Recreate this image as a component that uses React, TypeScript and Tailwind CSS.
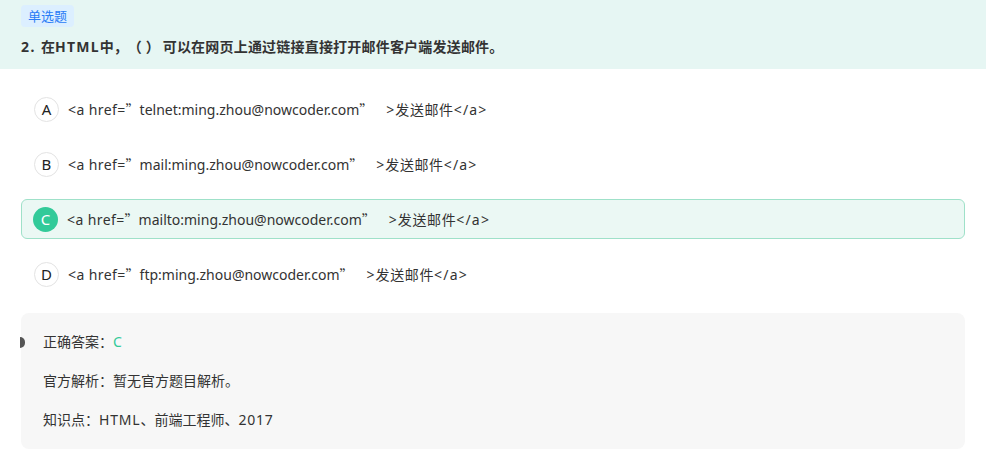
import React from "react";

type Opcao = {
  letra: string;
  protocolo: string;
};

const opcoes: Opcao[] = [
  { letra: "A", protocolo: "telnet" },
  { letra: "B", protocolo: "mail" },
  { letra: "C", protocolo: "mailto" },
  { letra: "D", protocolo: "ftp" },
];

const correta = "C";

const cjk = { fontFamily: '"Noto Sans CJK SC", sans-serif' };

// pontuação em largura cheia, como no original
const Aspas: React.FC = () => (
  <span className="inline-block w-[14px] text-left" style={cjk}>
    ”
  </span>
);

const App: React.FC = () => {
  return (
    <div
      className="w-[986px] h-[454px] bg-white text-[#333] overflow-hidden"
      style={{ fontFamily: '"Noto Sans", "Noto Sans CJK SC", sans-serif' }}
    >
      {/* cabeçalho da questão */}
      <div className="h-[69px] bg-[#e6f6f3] px-[21px] pt-[3px]">
        <span className="inline-block h-[22px] px-[7px] rounded-[4px] bg-[#dcefff] text-[#2a7cf6] text-[13px] leading-[22px]">
          单选题
        </span>
        <h2 className="mt-[9px] text-[14px] font-bold leading-[20px] text-[#333] whitespace-pre">
          <span className="tracking-[1.5px]">2. </span>
          在<span className="tracking-[1.2px]">HTML</span>中
          <span className="inline-block w-[14px] text-left" style={cjk}>，</span>
          <span className="inline-block w-[14px] text-right" style={cjk}>（</span>
          <span className="inline-block w-[18px] text-right" style={cjk}>）</span>
          <span className="ml-[3px] tracking-[0.2px]">可以在网页上通过链接直接打开邮件客户端发送邮件。</span>
        </h2>
      </div>

      {/* opções */}
      <div className="px-[21px] pt-[20px] flex flex-col gap-[15px]">
        {opcoes.map((o) => {
          const ativa = o.letra === correta;
          return (
            <div
              key={o.letra}
              className={
                ativa
                  ? "h-[40px] flex items-center pl-[11px] rounded-[6px] border border-[#9fe1c9] bg-[#ebf8f4]"
                  : "h-[40px] flex items-center pl-[12px] border border-transparent"
              }
            >
              <span
                className={
                  ativa
                    ? "w-[25px] h-[25px] rounded-full bg-[#32ca99] text-white flex items-center justify-center text-[15px]"
                    : "w-[25px] h-[25px] rounded-full border border-[#e3e3e3] bg-white flex items-center justify-center text-[15px] text-[#222]"
                }
              >
                {o.letra}
              </span>
              <span className="ml-[9px] text-[14px] whitespace-pre">
                <span className="tracking-[0.4px]">{"<a href="}</span>
                <Aspas />
                {o.protocolo}:ming.zhou@nowcoder.com
                <Aspas />
                <span className="ml-[13px] tracking-[1px]">{">"}</span>
                <span className="tracking-[0.6px]">{"发送邮件"}</span>
                <span className="tracking-[1.2px]">{"</a>"}</span>
              </span>
            </div>
          );
        })}
      </div>

      {/* resposta */}
      <div className="px-[21px] mt-[19px]">
        <div className="relative h-[136px] rounded-[8px] bg-[#f7f7f7] pl-[22px] pt-[19px] text-[14px]">
          <span className="absolute left-[-1px] top-[24px] w-[5px] h-[11px] rounded-r-full bg-[#555]" />
          <p className="leading-[20px]">
            正确答案：<span className="text-[#32ca99]">C</span>
          </p>
          <p className="leading-[20px] mt-[19px]">官方解析：暂无官方题目解析。</p>
          <p className="leading-[20px] mt-[19px]">
            知识点：<span className="tracking-[0.8px]">HTML</span>、前端工程师、<span className="tracking-[0.8px]">2017</span>
          </p>
        </div>
      </div>
    </div>
  );
};

export default App;
